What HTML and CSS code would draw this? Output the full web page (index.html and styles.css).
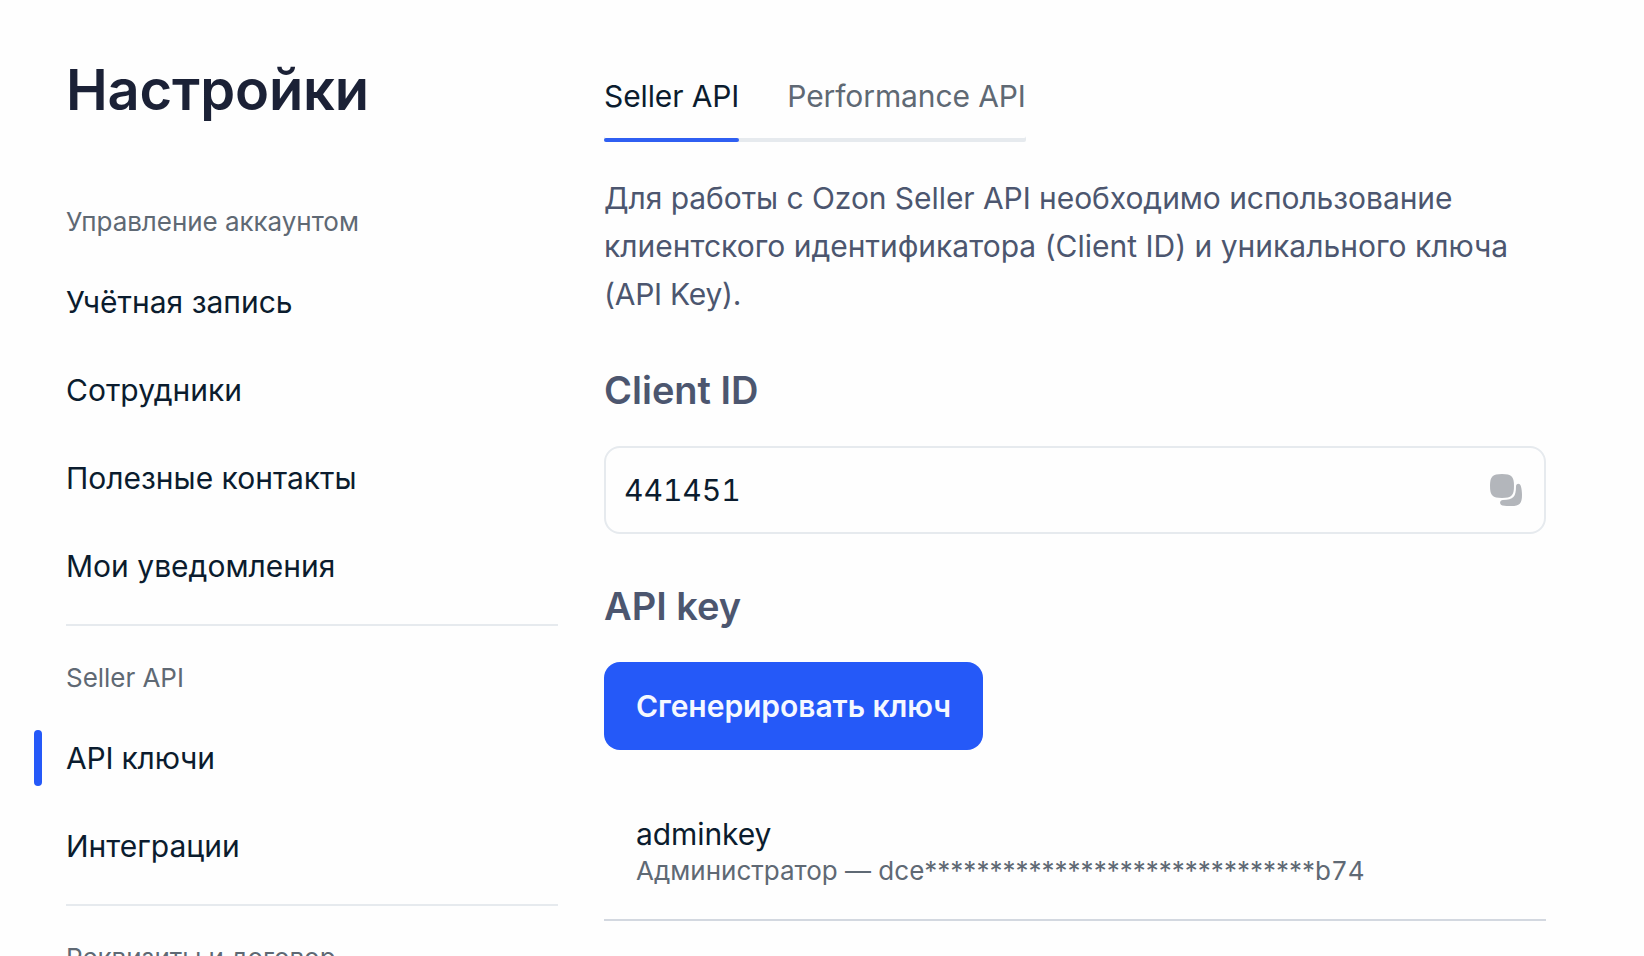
FILE: index.html
```html
<!DOCTYPE html>
<html lang="ru">
<head>
<meta charset="utf-8">
<title>Настройки</title>
<link rel="stylesheet" href="styles.css">
</head>
<body>
<div class="page">
  <aside class="sidebar">
    <h1 class="title">Настройки</h1>
    <nav class="nav">
      <section class="group">
        <div class="caption">Управление аккаунтом</div>
        <a class="item">Учётная запись</a>
        <a class="item">Сотрудники</a>
        <a class="item">Полезные контакты</a>
        <a class="item">Мои уведомления</a>
      </section>
      <section class="group">
        <div class="caption">Seller API</div>
        <a class="item active">API ключи</a>
        <a class="item">Интеграции</a>
      </section>
      <section class="group">
        <div class="caption">Реквизиты и договор</div>
      </section>
    </nav>
  </aside>
  <main class="content">
    <div class="tabs">
      <a class="tab selected">Seller API</a>
      <a class="tab">Performance API</a>
    </div>
    <p class="intro"><span class="tight">Для работы с Ozon Seller API необходимо использование</span><br>клиентского идентификатора (Client ID) и уникального ключа<br><span class="tighter">(API Key).</span></p>
    <h2 class="heading">Client ID</h2>
    <div class="field">
      <span class="value">441451</span>
      <svg class="copy" viewBox="0 0 34 34" width="34" height="34">
        <path d="M13 1c9.500 0 12 2.500 12 12s-2.500 12-12 12S1 22.500 1 13 3.500 1 13 1z"/>
        <path d="M27 13.500c0-3.500 4-3.500 4.800-.5.800 2.600 1.200 6 1.200 9 0 8.500-2.500 11-10.500 11-3.500 0-6.500-.1-9-.6-3.500-1-3-5.400.5-5.400 10.500 0 13-3.500 13-13.500z"/>
      </svg>
    </div>
    <h2 class="heading">API key</h2>
    <button class="generate">Сгенерировать ключ</button>
    <div class="key">
      <div class="key-name">adminkey</div>
      <div class="key-info">Администратор — dce******************************<span class="value">b74</span></div>
    </div>
  </main>
</div>
</body>
</html>
```
FILE: styles.css
```css
* { box-sizing: border-box; }
body { margin: 0; background: #fefefe; color: #0b1c2e; font-family: Inter, sans-serif; }
.page { display: flex; gap: 46px; height: 956px; overflow: hidden; padding-left: 66px; }
.sidebar { width: 492px; flex: none; }
.title { margin: 56px 0 0; font-size: 56px; line-height: 68px; font-weight: 600; letter-spacing: -0.15px; color: #1b2136; }
.nav { padding-top: 76px; }
.group { border-bottom: 2px solid #e6eaee; padding-bottom: 14px; margin-bottom: 30px; }
.caption { font-size: 26px; line-height: 44px; letter-spacing: -0.04px; color: #5f6974; margin-bottom: 14px; }
.item { display: flex; align-items: center; height: 88px; font-size: 30px; }
.active { position: relative; letter-spacing: -0.2px; }
.active::before { content: ""; position: absolute; left: -32px; top: 16px; width: 8px; height: 56px; border-radius: 4px; background: #2559f8; }
.content { width: 942px; padding-top: 74px; }
.tabs { display: flex; width: max-content; gap: 48px; height: 68px; box-shadow: inset 0 -4px #e6eaee; border-radius: 2px; }
.tab { font-size: 30px; line-height: 44px; letter-spacing: -0.11px; color: #5f6974; }
.selected { position: relative; color: #0b1c2e; }
.selected::after { content: ""; position: absolute; left: 0; right: 0; bottom: 0; height: 4px; border-radius: 2px; background: #2f5ff2; }
.intro { margin: 32px 0 0; font-size: 30px; line-height: 48px; color: #4c566f; white-space: nowrap; }
.tight { letter-spacing: -0.06px; }
.tighter { letter-spacing: -0.25px; }
.heading { margin: 48px 0 0; font-size: 38px; line-height: 48px; font-weight: 600; color: #4c566f; }
.field { display: flex; align-items: center; justify-content: space-between; height: 88px; margin-top: 32px; padding: 0 21px 0 18px; border: 2px solid #e6eaee; border-radius: 16px; font-size: 30px; }
.value { font-variant-numeric: tabular-nums; }
.copy { fill: #b3b6bb; }
.generate { display: block; width: 379px; height: 88px; margin-top: 32px; padding: 0; border: 0; border-radius: 16px; background: #2559f8; color: #f5f8ff; font: 600 30px Inter, sans-serif; letter-spacing: -0.05px; }
.key { margin-top: 65px; height: 106px; padding-left: 32px; border-bottom: 2px solid #d3d8e0; }
.key-name { font-size: 30px; line-height: 38px; letter-spacing: -0.08px; }
.key-info { font-size: 26px; line-height: 35px; color: #5f6974; }
```
